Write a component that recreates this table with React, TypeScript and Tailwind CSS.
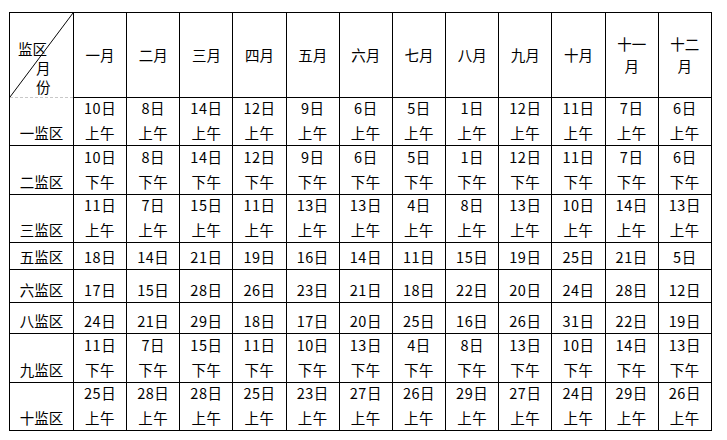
const MONTHS = ["一月", "二月", "三月", "四月", "五月", "六月", "七月", "八月", "九月", "十月", "十一|月", "十二|月"]

const ROWS = [
  { label: "一监区", h: "h-[48px]", days: [10, 8, 14, 12, 9, 6, 5, 1, 12, 11, 7, 6], part: "上午" },
  { label: "二监区", h: "h-[49px]", days: [10, 8, 14, 12, 9, 6, 5, 1, 12, 11, 7, 6], part: "下午" },
  { label: "三监区", h: "h-[47px]", days: [11, 7, 15, 11, 13, 13, 4, 8, 13, 10, 14, 13], part: "上午" },
  { label: "五监区", h: "h-[27px]", days: [18, 14, 21, 19, 16, 14, 11, 15, 19, 25, 21, 5], part: "" },
  { label: "六监区", h: "h-[33px]", days: [17, 15, 28, 26, 23, 21, 18, 22, 20, 24, 28, 12], part: "" },
  { label: "八监区", h: "h-[31px]", days: [24, 21, 29, 18, 17, 20, 25, 16, 26, 31, 22, 19], part: "" },
  { label: "九监区", h: "h-[49px]", days: [11, 7, 15, 11, 10, 13, 4, 8, 13, 10, 14, 13], part: "下午" },
  { label: "十监区", h: "h-[48px]", days: [25, 28, 28, 25, 23, 27, 26, 29, 27, 24, 29, 26], part: "上午" },
]

export default function App() {
  return (
    <div
      className="w-[727px] h-[440px] bg-white text-black pl-[9px] pt-[12px] text-[14.5px] leading-[24px]"
      style={{ fontFamily: '"Noto Sans CJK SC", "Liberation Sans", sans-serif' }}
    >
      <table className="w-[703px] table-fixed border-collapse">
        <colgroup>
          <col className="w-[64px]" />
          {MONTHS.map(m => (
            <col key={m} />
          ))}
        </colgroup>
        <tbody>
          <tr className="h-[85px]">
            <td className="relative border border-black border-b-[#c8c8c8] [border-bottom-style:dashed] p-0 align-bottom pb-[1px] leading-[19px]">
              <svg className="absolute inset-0 w-full h-full" preserveAspectRatio="none" viewBox="0 0 64 85">
                <line x1="64" y1="0" x2="0" y2="85" stroke="#000" strokeWidth="1" />
              </svg>
              <div className="pl-[8px]">监区</div>
              <div className="pl-[26px]">月</div>
              <div className="pl-[26px]">份</div>
            </td>
            {MONTHS.map(m => (
              <td key={m} className="border border-black p-0 text-center align-middle leading-[22px]">
                {m.split("|").map(t => (
                  <div key={t}>{t}</div>
                ))}
              </td>
            ))}
          </tr>
          {ROWS.map((row, i) => (
            <tr key={row.label} className={row.h}>
              <td className={`border border-black p-0 text-center align-bottom ${i === 0 ? "border-t-0" : ""}`}>
                {row.label}
              </td>
              {row.days.map((d, j) => (
                <td key={j} className="border border-black p-0 text-center align-bottom tracking-[0.5px]">
                  <div className={row.part ? "leading-[19px] mb-[4px]" : ""}>{d}日</div>
                  {row.part && <div>{row.part}</div>}
                </td>
              ))}
            </tr>
          ))}
        </tbody>
      </table>
    </div>
  )
}
